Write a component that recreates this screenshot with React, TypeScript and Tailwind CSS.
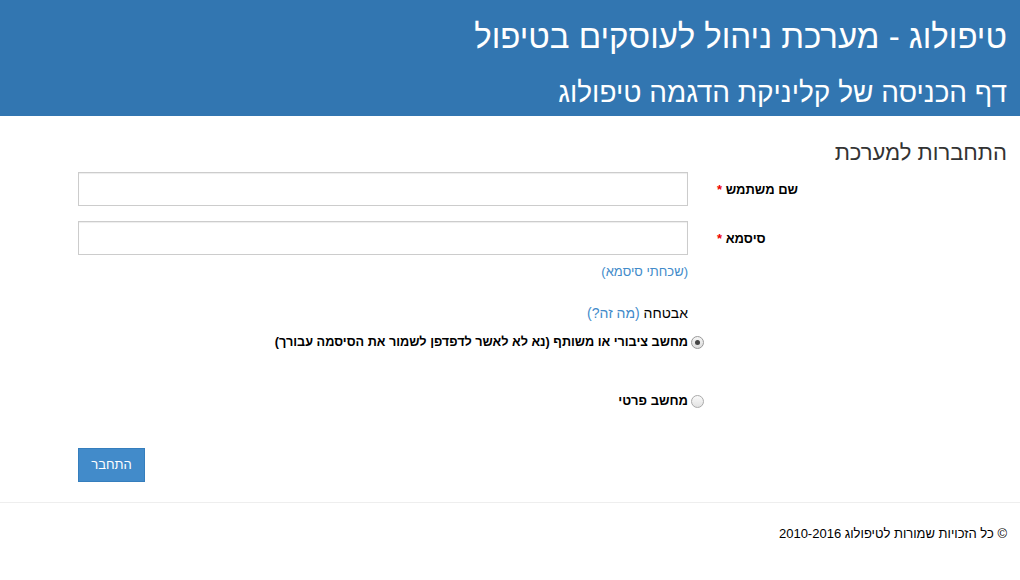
import React from "react";

export default function App() {
  return (
    <div dir="rtl" className="w-[1020px] h-[580px] bg-white text-[#333] overflow-hidden" style={{ fontFamily: '"Liberation Sans", Arial, sans-serif' }}>
      <header className="bg-[#3276b1] h-[116px] text-white pr-[13px] pt-[15px]">
        <h1 className="text-[33px] leading-[44px] font-normal m-0">טיפולוג - מערכת ניהול לעוסקים בטיפול</h1>
        <h2 className="text-[28px] leading-[36px] font-normal mt-[16px]">דף הכניסה של קליניקת הדגמה טיפולוג</h2>
      </header>
      <main className="pr-[13px] pt-[23px]">
        <h3 className="text-[22px] leading-[28px] font-normal text-[#333]">התחברות למערכת</h3>
        <div className="flex mt-[5px] items-start">
          <div className="w-[319px] shrink-0 pl-[29px] text-left pt-[8px] text-[13px] font-bold text-[#000]">
            שם משתמש <span className="text-[#e00]">*</span>
          </div>
          <input className="w-[610px] h-[34px] border border-[#ccc] shadow-[inset_0_1px_1px_rgba(0,0,0,0.075)] outline-none" />
        </div>
        <div className="flex mt-[15px] items-start">
          <div className="w-[319px] shrink-0 pl-[29px] text-left pt-[8px] text-[13px] font-bold text-[#000]">
            סיסמא <span className="text-[#e00]">*</span>
          </div>
          <div className="w-[610px] flex flex-col">
            <input type="password" className="w-[610px] h-[34px] border border-[#ccc] shadow-[inset_0_1px_1px_rgba(0,0,0,0.075)] outline-none" />
            <a className="text-[13px] text-[#428bca] mt-[8px] leading-[18px]">(שכחתי סיסמא)</a>
            <div className="text-[14px] leading-[18px] text-[#000] mt-[23px]">
              אבטחה <a className="text-[#428bca]">(מה זה?)</a>
            </div>
            <label className="flex items-center mt-[11px] mr-[-16px] text-[13px] font-bold text-[#000] leading-[18px]">
              <span className="w-[13px] h-[13px] shrink-0 rounded-full border border-[#999] bg-gradient-to-b from-[#f5f5f5] to-[#ddd] flex items-center justify-center">
                <span className="w-[5px] h-[5px] rounded-full bg-[#444]" />
              </span>
              <span className="mr-[3px] text-[12.7px]">מחשב ציבורי או משותף (נא לא לאשר לדפדפן לשמור את הסיסמה עבורך)</span>
            </label>
            <label className="flex items-center mt-[41px] mr-[-16px] text-[13px] font-bold text-[#000] leading-[18px]">
              <span className="w-[13px] h-[13px] shrink-0 rounded-full border border-[#aaa] bg-gradient-to-b from-[#fafafa] to-[#e2e2e2]" />
              <span className="mr-[3px]">מחשב פרטי</span>
            </label>
          </div>
        </div>
        <div className="flex mt-[38px]">
          <div className="w-[319px] shrink-0" />
          <div className="w-[610px] flex justify-end">
            <button className="w-[67px] h-[34px] bg-[#428bca] border border-[#357ebd] text-white text-[13px]">התחבר</button>
          </div>
        </div>
      </main>
      <hr className="mt-[20px] border-0 border-t border-[#eee]" />
      <footer className="pr-[13px] pt-[21px] text-[13px] text-[#000]">© כל הזכויות שמורות לטיפולוג 2010-2016</footer>
    </div>
  );
}
